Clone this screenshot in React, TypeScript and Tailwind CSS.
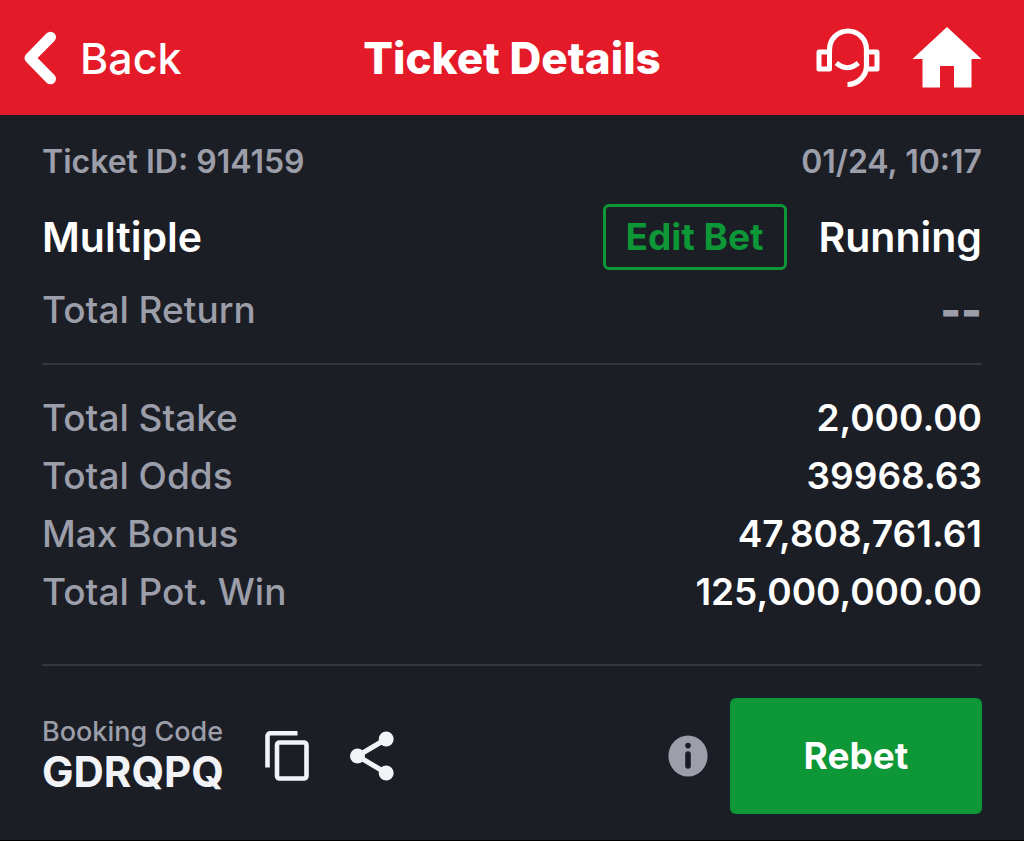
import type { ReactNode } from "react"

const totals = [
  { label: "Total Stake", value: "2,000.00" },
  { label: "Total Odds", value: "39968.63" },
  { label: "Max Bonus", value: "47,808,761.61" },
  { label: "Total Pot. Win", value: "125,000,000.00" },
]

function ChevronIcon() {
  return (
    <svg className="h-[54px] w-[34px]" viewBox="0 0 34 54" fill="none" aria-hidden="true">
      <path
        d="M28.5 6.2 8 27l20.500 20.800"
        stroke="currentColor"
        strokeWidth="11"
        strokeLinecap="round"
        strokeLinejoin="round"
      />
    </svg>
  )
}

function SupportIcon() {
  return (
    <svg className="h-[60px] w-16" viewBox="0 0 64 60" fill="none" stroke="currentColor" aria-hidden="true">
      {/* Headband, running down the right side into the microphone */}
      <path d="M13.500 24V21.500a18.200 18.200 0 0 1 37 0v16A19 19 0 0 1 31.500 56.500" strokeWidth="5.200" />
      {/* Ear cups */}
      <path d="M3 24h10.500v17H3zM50.500 24H61v17H50.500z" strokeWidth="5" strokeLinejoin="round" />
      {/* Smile */}
      <path d="M20.300 35q11 9.500 22 0" strokeWidth="5" />
    </svg>
  )
}

function HomeIcon() {
  return (
    <svg className="h-[61px] w-[70px]" viewBox="0 0 70 61" fill="currentColor" aria-hidden="true">
      <path d="M35 0 69.500 32H59.500V60.500H42V39H28V60.500H10.500V32H.5z" />
    </svg>
  )
}

function CopyIcon() {
  return (
    <svg className="h-[50px] w-11" viewBox="0 0 44 50" fill="none" stroke="currentColor" strokeWidth="4.600" aria-hidden="true">
      <path d="M32.500 2.300H5.300A2.800 2.800 0 0 0 2.500 5.100V36.500" />
      <rect x="12" y="11.500" width="29.500" height="36" rx="2.500" />
    </svg>
  )
}

function ShareIcon() {
  return (
    <svg className="h-[50px] w-11" viewBox="0 0 44 50" fill="currentColor" aria-hidden="true">
      <path d="M36.200 8 7.500 25l28.700 17" fill="none" stroke="currentColor" strokeWidth="5" />
      <circle cx="36.200" cy="8" r="7.500" />
      <circle cx="7.500" cy="25" r="7.500" />
      <circle cx="36.200" cy="42" r="7.500" />
    </svg>
  )
}

function InfoIcon() {
  return (
    <svg className="h-[42px] w-10" viewBox="0 0 40 42" aria-hidden="true">
      <ellipse cx="20" cy="21" rx="19.600" ry="20.500" fill="#9c9eaa" />
      <circle cx="20" cy="10.600" r="2.800" fill="#1c1e26" />
      <path d="M20 19v12" stroke="#1c1e26" strokeWidth="5.600" strokeLinecap="round" />
    </svg>
  )
}

function Row({ className = "", children }: { className?: string; children: ReactNode }) {
  return <div className={`flex items-center justify-between ${className}`}>{children}</div>
}

export default function App() {
  return (
    <div className="min-h-screen border-b border-black bg-[#1c1e26] font-['Inter',sans-serif] text-white">
      <header className="grid h-[115px] grid-cols-[1fr_auto_1fr] items-center bg-[#e51a28] px-[42px]">
        <a href="#back" className="-ml-5 flex items-center gap-6 text-[43px] leading-[52px] font-medium">
          <ChevronIcon />
          Back
        </a>
        <h1 className="text-[44px] leading-[52px] font-extrabold">Ticket Details</h1>
        <div className="flex items-center justify-end gap-8">
          <button type="button" aria-label="Support">
            <SupportIcon />
          </button>
          <a href="#home" aria-label="Home">
            <HomeIcon />
          </a>
        </div>
      </header>

      <main className="px-[42px]">
        <section className="border-b-2 border-[#353740] pt-[27px] pb-[33px]">
          <Row className="text-[32px] leading-10 font-semibold text-[#9c9eaa]">
            <p>Ticket ID: 914159</p>
            <time>01/24, 10:17</time>
          </Row>

          <Row className="mt-[22px]">
            <h2 className="text-[41px] leading-[52px] font-semibold">Multiple</h2>
            <div className="flex items-center gap-8">
              <button
                type="button"
                className="h-[66px] w-[184px] rounded-md border-3 border-[#0d9737] text-[37px] leading-10 font-bold text-[#0d9737]"
              >
                Edit Bet
              </button>
              <p className="text-[41px] leading-[52px] font-semibold">Running</p>
            </div>
          </Row>

          <Row className="mt-5 text-[#9c9eaa]">
            <p className="text-[37px] leading-10 font-medium">Total Return</p>
            <p className="text-[44px] leading-10 font-black">--</p>
          </Row>
        </section>

        <dl className="border-b-2 border-[#353740] pt-6 pb-[43px] text-[37px] leading-[58px]">
          {totals.map((item) => (
            <Row key={item.label}>
              <dt className="font-medium text-[#9c9eaa]">{item.label}</dt>
              <dd className="font-semibold">{item.value}</dd>
            </Row>
          ))}
        </dl>

        <Row className="pt-8 pb-6">
          <div className="flex items-center gap-[41px]">
            <div>
              <p className="text-[27px] leading-8 font-medium text-[#9c9eaa]">Booking Code</p>
              <p className="text-[42px] leading-[48px] font-bold text-[#f2f3f7]">GDRQPQ</p>
            </div>
            <button type="button" aria-label="Copy booking code" className="text-[#f2f3f7]">
              <CopyIcon />
            </button>
            <button type="button" aria-label="Share ticket" className="text-[#f2f3f7]">
              <ShareIcon />
            </button>
          </div>
          <div className="flex items-center gap-[22px]">
            <button type="button" aria-label="Rebet information">
              <InfoIcon />
            </button>
            <button
              type="button"
              className="h-[116px] w-[252px] rounded-md bg-[#0d9737] text-[37px] leading-10 font-bold"
            >
              Rebet
            </button>
          </div>
        </Row>
      </main>
    </div>
  )
}
